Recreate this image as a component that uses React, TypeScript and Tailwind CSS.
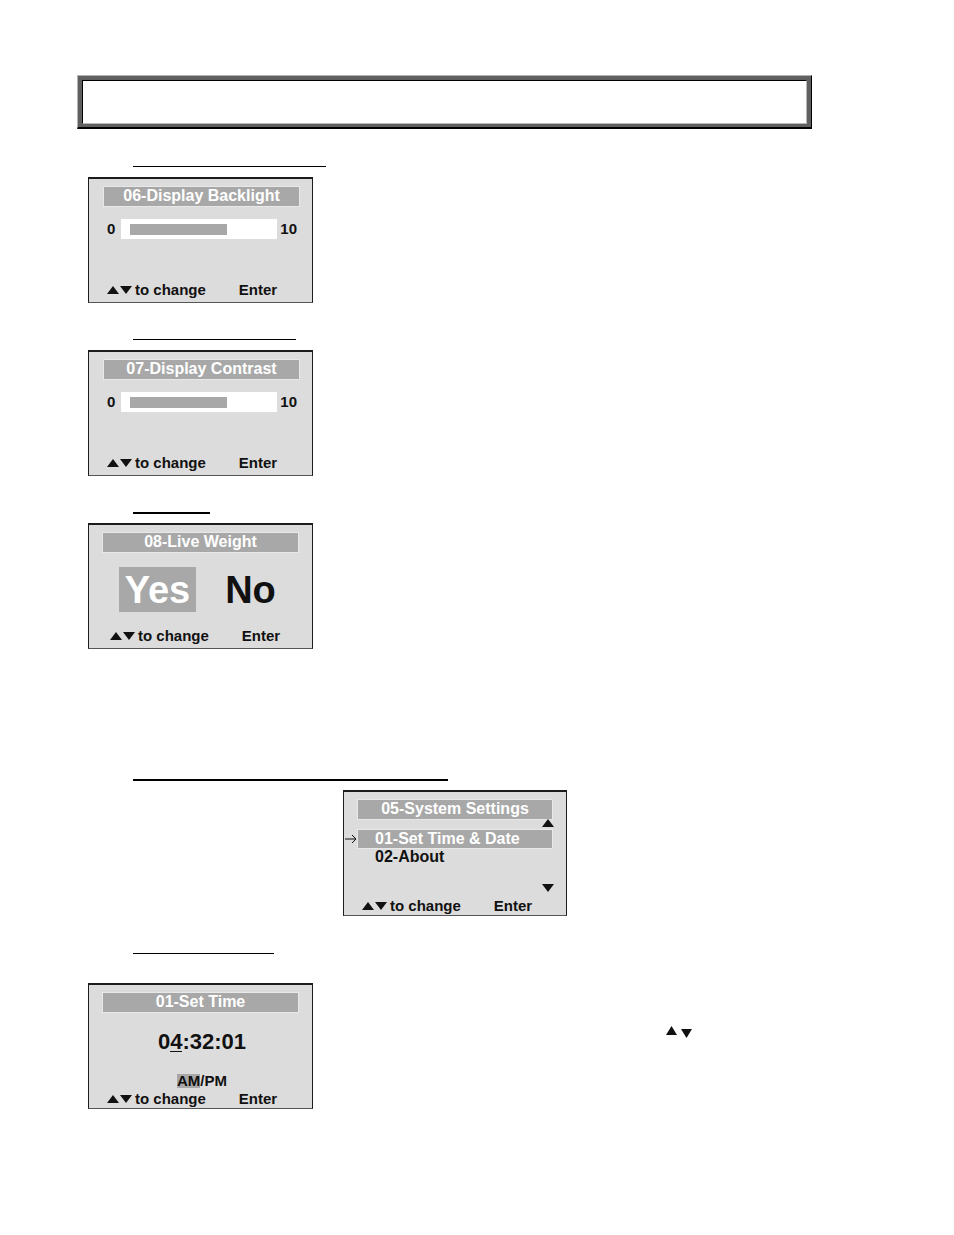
import { ReactNode, useState } from "react";

function Triangle({ down = false, className = "w-3 h-2" }: { down?: boolean; className?: string }) {
  return (
    <svg viewBox="0 0 12 8" preserveAspectRatio="none" className={`shrink-0 fill-[#111] ${className}`} aria-hidden="true">
      <path d={down ? "M0 0H12L6 8Z" : "M0 8H12L6 0Z"} />
    </svg>
  );
}

type ScreenProps = {
  title: string;
  children: ReactNode;
  width?: string;
  inset?: string;
  body?: string;
  footer?: string;
};

function Screen({
  title,
  children,
  width = "w-[225px]",
  inset = "ml-[15px] mr-[13px]",
  body = "h-[75px]",
  footer = "pl-[18px] pb-[3px]",
}: ScreenProps) {
  return (
    <section className={`${width} shrink-0 border border-t-2 border-[#1c1c1c] border-b-[#555] bg-[#dcdcdc] pt-2 text-[#111]`}>
      <h2 className={`${inset} h-[19px] bg-[#a8a8a8] text-center text-[16px] leading-[18px] text-white outline outline-[#e8e8e8]`}>
        {title}
      </h2>
      <div className={body}>{children}</div>
      <div className={`flex items-center text-[15px] leading-[18px] ${footer}`}>
        <Triangle />
        <Triangle down className="ml-px w-3 h-2" />
        <span className="ml-[3px]">to change</span>
        <button type="button" className="ml-[33px]">Enter</button>
      </div>
    </section>
  );
}

function LevelScreen({ title, label }: { title: string; label: string }) {
  const [level, setLevel] = useState(7);
  const fill = `${level * 10}%`;

  return (
    <Screen title={title}>
      <div className="flex items-center pl-[18px] pr-[15px] pt-[13px] text-[15px] leading-5">
        <span className="w-[14px]">0</span>
        <div className="flex h-5 flex-1 items-center bg-white px-[9px]">
          <input
            type="range"
            min={0}
            max={10}
            value={level}
            onChange={(e) => setLevel(Number(e.target.value))}
            aria-label={label}
            className="h-[11px] w-full min-w-0 appearance-none [&::-webkit-slider-thumb]:opacity-0"
            style={{ background: `linear-gradient(to right, #a8a8a8 ${fill}, #fff ${fill})` }}
          />
        </div>
        <span className="ml-[3px]">10</span>
      </div>
    </Screen>
  );
}

function LiveWeightScreen() {
  const [live, setLive] = useState(true);
  const on = "bg-[#a8a8a8] text-white";

  return (
    <Screen title="08-Live Weight" inset="mx-[14px]" footer="pl-[21px] pb-[3px]">
      <div className="flex gap-4 pl-[30px] pt-[15px] text-[38px] leading-[47px]">
        <button type="button" aria-pressed={live} onClick={() => setLive(true)} className={`h-[45px] w-[77px] ${live ? on : ""}`}>
          Yes
        </button>
        <button type="button" aria-pressed={!live} onClick={() => setLive(false)} className={`h-[45px] w-[77px] ${live ? "" : on}`}>
          No
        </button>
      </div>
    </Screen>
  );
}

function SystemScreen() {
  return (
    <Screen title="05-System Settings" width="w-[224px]" inset="mx-[14px]" body="flex h-[78px] flex-col" footer="pl-[18px]">
      <Triangle className="relative mr-3 h-2 w-3 self-end" />
      <ul className="mt-[3px] text-[16px]">
        <li className="flex items-center pl-px">
          <svg viewBox="0 0 12 10" className="h-[10px] w-3 fill-none stroke-[#111]" aria-hidden="true">
            <path d="M0 5H11M7 1L11 5L7 9" />
          </svg>
          <button type="button" className="ml-px mr-[14px] flex-1 bg-[#a8a8a8] pl-[17px] text-left leading-[18px] text-white outline outline-[#e8e8e8]">
            01-Set Time &amp; Date
          </button>
        </li>
        <li>
          <button type="button" className="block pl-[31px] text-left leading-[17px]">02-About</button>
        </li>
      </ul>
      <Triangle down className="mb-[5px] mr-3 mt-auto h-2 w-3 self-end" />
    </Screen>
  );
}

function TimeScreen() {
  return (
    <Screen title="01-Set Time" inset="mx-[14px]" body="h-[78px] pl-[3px] pt-[18px] text-center" footer="pl-[18px]">
      <p className="text-[22px] leading-[24px]">
        0<span className="inline-block h-[22px] border-b border-[#111] leading-[24px]">4</span>:32:01
      </p>
      <div className="mt-[20px] flex items-center justify-center text-[15px] leading-[14px]">
        <button type="button" className="bg-[#a8a8a8]">AM</button>
        <span>/</span>
        <button type="button">PM</button>
      </div>
    </Screen>
  );
}

export default function App() {
  return (
    <main className="min-h-screen bg-white pl-[77px] pr-[142px] pt-[75px] font-['Liberation_Sans',Arial,sans-serif] font-bold">
      {/* Bevelled title frame */}
      <header className="border border-b-2 border-[#b0b4b0] border-b-black border-r-black">
        <div className="border-4 border-b-3 border-[#606060]">
          <div className="h-[44px] border border-black border-b-[#b8b8b8] border-r-[#b8b8b8]" />
        </div>
      </header>

      <hr className="ml-14 mt-[37px] w-[193px] border-black" />
      <div className="ml-[11px] mt-[10px]">
        <LevelScreen title="06-Display Backlight" label="Display backlight" />
      </div>

      <hr className="ml-14 mt-9 w-[163px] border-black" />
      <div className="ml-[11px] mt-[10px]">
        <LevelScreen title="07-Display Contrast" label="Display contrast" />
      </div>

      <hr className="ml-14 mt-9 w-[77px] border-t-2 border-black" />
      <div className="ml-[11px] mt-[9px]">
        <LiveWeightScreen />
      </div>

      <hr className="ml-14 mt-[130px] w-[315px] border-t-2 border-black" />
      <div className="ml-[266px] mt-[9px]">
        <SystemScreen />
      </div>

      <hr className="ml-14 mt-[37px] w-[141px] border-black" />
      <div className="ml-[11px] mt-[29px] flex">
        <TimeScreen />
        <div className="ml-[353px] mt-[43px] flex items-start gap-1">
          <Triangle className="h-[9px] w-[11px]" />
          <Triangle down className="mt-[3px] h-[9px] w-[11px]" />
        </div>
      </div>
    </main>
  );
}
